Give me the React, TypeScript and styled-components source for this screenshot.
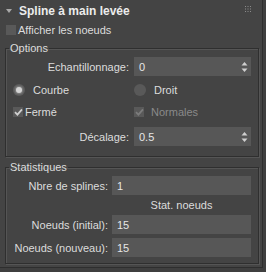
import React from "react";
import styled, { createGlobalStyle } from "styled-components";

const Global = createGlobalStyle`
  html, body { margin: 0; padding: 0; background: #3f3f3f; }
  body { font-family: "Liberation Sans", Arial, sans-serif; font-size: 11px; color: #dcdcdc; }
  * { box-sizing: border-box; }
`;

const Panel = styled.div`
  width: 263px;
  height: 268px;
  background: #444444;
  border-right: 1px solid #2e2e2e;
  border-bottom: 1px solid #2e2e2e;
  display: flex;
  flex-direction: column;
`;

const Header = styled.div`
  height: 22px;
  display: flex;
  align-items: center;
  padding-left: 6px;
  gap: 7px;
  position: relative;
`;

const Title = styled.span`
  font-weight: bold;
  font-size: 12px;
  color: #ececec;
`;

const Grip = styled.svg`
  position: absolute;
  right: 11px;
  top: 6px;
`;

const CheckRow = styled.label<{ $indent?: number; $disabled?: boolean }>`
  display: flex;
  align-items: center;
  gap: 2px;
  padding-left: ${(p) => p.$indent ?? 0}px;
  color: ${(p) => (p.$disabled ? "#8a8a8a" : "#dcdcdc")};
`;

const Box = styled.span<{ $size: number }>`
  width: ${(p) => p.$size}px;
  height: ${(p) => p.$size}px;
  background: #595959;
  display: inline-flex;
  align-items: center;
  justify-content: center;
`;

const TopCheck = styled.div`
  height: 16px;
  display: flex;
  align-items: center;
  padding-left: 6px;
`;

const Group = styled.fieldset`
  margin: 3px 0 0 5px;
  width: 254px;
  padding: 0 7px 0 0;
  border: 1px solid #2f2f2f;
  box-shadow: inset 1px 1px 0 #555555, 1px 1px 0 #555555;
  min-width: 0;
`;

const Legend = styled.legend`
  margin-left: 3px;
  padding: 0 1px;
  line-height: 14px;
  color: #dcdcdc;
`;

const FormGrid = styled.div<{ $label: number; $gap: number }>`
  display: grid;
  grid-template-columns: ${(p) => p.$label}px 1fr;
  column-gap: ${(p) => p.$gap}px;
  align-items: center;
`;

const Label = styled.span`
  text-align: right;
  white-space: nowrap;
`;

const Field = styled.div`
  height: 19px;
  background: #575757;
  display: flex;
  align-items: center;
  padding-left: 5px;
  color: #e6e6e6;
  position: relative;
`;

const Spin = styled.svg`
  position: absolute;
  right: 3px;
  top: 5px;
`;

const RowSpace = styled.div<{ $h: number }>`
  height: ${(p) => p.$h}px;
  display: flex;
  align-items: center;
`;

const Centered = styled.div`
  height: 20px;
  display: flex;
  align-items: center;
  justify-content: center;
`;

const Radio = styled.span<{ $on?: boolean }>`
  width: 12px;
  height: 12px;
  border-radius: 50%;
  background: #595959;
  display: inline-flex;
  align-items: center;
  justify-content: center;
  margin-right: 6px;
  &::after {
    content: "";
    display: ${(p) => (p.$on ? "block" : "none")};
    width: 6px;
    height: 6px;
    border-radius: 50%;
    background: #d4d4d4;
    box-shadow: 0 0 2px 1px #8a8a8a;
  }
`;

const Check = ({ color }: { color: string }) => (
  <svg width="9" height="8" viewBox="0 0 9 8">
    <path d="M1 4.2 L3.4 6.6 L8 1.4" fill="none" stroke={color} strokeWidth="1.8" />
  </svg>
);

const Spinner = () => (
  <Spin width="7" height="10" viewBox="0 0 7 10">
    <path d="M3.5 0 L6.5 3.5 L0.5 3.5 Z" fill="#cfcfcf" />
    <path d="M3.5 10 L6.5 6.5 L0.5 6.5 Z" fill="#cfcfcf" />
  </Spin>
);

const Spacer = styled.div<{ $h: number }>`
  height: ${(p) => p.$h}px;
`;

export default function App() {
  return (
    <>
      <Global />
      <Panel>
        <Header>
          <svg width="6" height="4" viewBox="0 0 6 4">
            <path d="M0 0 L6 0 L3 4 Z" fill="#a8a8a8" />
          </svg>
          <Title>Spline à main levée</Title>
          <Grip width="6" height="6" viewBox="0 0 6 6">
            {[0, 2.5, 5].map((x) =>
              [0.5, 3, 5.5].map((y) => <rect key={`${x}-${y}`} x={x} y={y - 0.5} width="1" height="1" fill="#8c8c8c" />)
            )}
          </Grip>
        </Header>
        <TopCheck>
          <CheckRow>
            <Box $size={10} />
            Afficher les noeuds
          </CheckRow>
        </TopCheck>

        <Group>
          <Legend>Options</Legend>
          <Spacer $h={2} />
          <FormGrid $label={123} $gap={5}>
            <Label>Echantillonnage:</Label>
            <Field>
              0
              <Spinner />
            </Field>
          </FormGrid>
          <FormGrid $label={123} $gap={5}>
            <RowSpace $h={28}>
              <CheckRow $indent={7}>
                <Radio $on />
                Courbe
              </CheckRow>
            </RowSpace>
            <RowSpace $h={28}>
              <CheckRow>
                <Radio />
                Droit
              </CheckRow>
            </RowSpace>
            <RowSpace $h={16}>
              <CheckRow $indent={7}>
                <Box $size={10}>
                  <Check color="#cfcfcf" />
                </Box>
                Fermé
              </CheckRow>
            </RowSpace>
            <RowSpace $h={16}>
              <CheckRow $disabled>
                <Box $size={10}>
                  <Check color="#7c7c7c" />
                </Box>
                <span style={{ marginLeft: 5 }}>Normales</span>
              </CheckRow>
            </RowSpace>
          </FormGrid>
          <Spacer $h={7} />
          <FormGrid $label={123} $gap={5}>
            <Label>Décalage:</Label>
            <Field>
              0.5
              <Spinner />
            </Field>
          </FormGrid>
          <Spacer $h={10} />
        </Group>

        <Group>
          <Legend>Statistiques</Legend>
          <Spacer $h={2} />
          <FormGrid $label={102} $gap={4}>
            <Label>Nbre de splines:</Label>
            <Field>1</Field>
            <span />
            <Centered>Stat. noeuds</Centered>
            <Label>Noeuds (initial):</Label>
            <Field>15</Field>
          </FormGrid>
          <Spacer $h={4} />
          <FormGrid $label={102} $gap={4}>
            <Label>Noeuds (nouveau):</Label>
            <Field>15</Field>
          </FormGrid>
          <Spacer $h={6} />
        </Group>
      </Panel>
    </>
  );
}
